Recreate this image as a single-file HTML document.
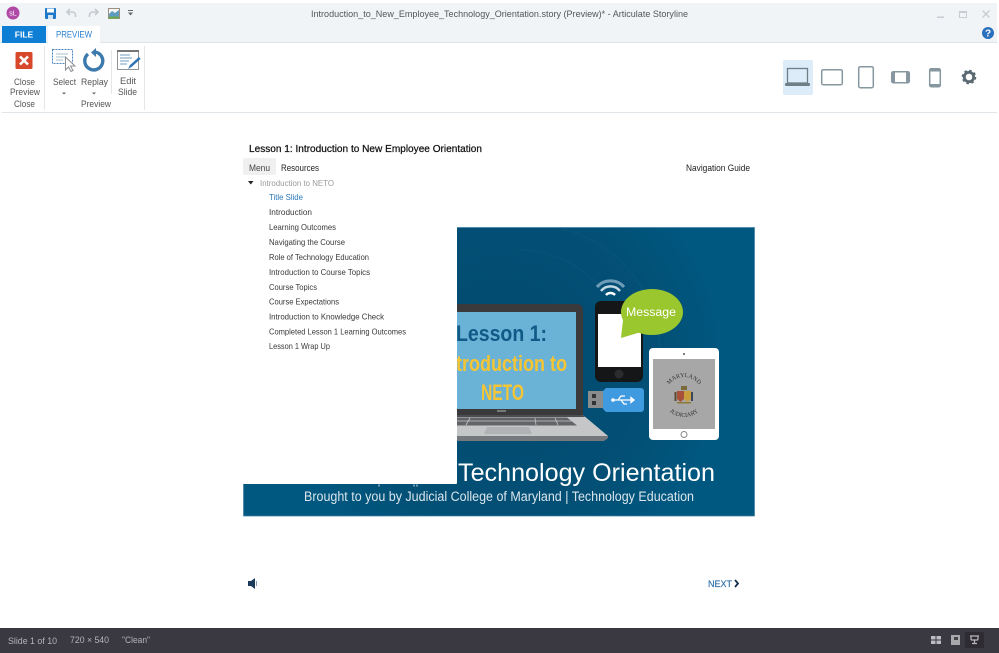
<!DOCTYPE html>
<html><head><meta charset="utf-8"><title>Articulate Storyline Preview</title>
<style>
html,body{margin:0;padding:0;background:#fff;width:999px;height:653px;overflow:hidden}
svg{display:block}
text{font-family:"Liberation Sans",sans-serif}
.u{font-size:9.5px;fill:#555}
.m{font-size:8.5px;fill:#3a3a3a}
.s{font-size:9.5px;fill:#b5b4b9}
.d{fill:none;stroke:#87979f;stroke-width:1.5}
</style></head><body>
<svg width="999" height="653" viewBox="0 0 999 653" xmlns="http://www.w3.org/2000/svg">
<defs>
<radialGradient id="bg" gradientUnits="userSpaceOnUse" cx="500" cy="360" r="220"><stop offset="0" stop-color="#024a6e"/><stop offset=".7" stop-color="#034f75"/><stop offset="1" stop-color="#00577f"/></radialGradient>
<clipPath id="sc"><rect x="457" y="312" width="119" height="97"/></clipPath>
<path id="arcT" d="M666 395a18 18 0 0 1 36 0"/>
<path id="arcB" d="M662 395a22 22 0 0 0 44 0"/>
</defs>
<rect width="999" height="653" fill="#fff"/>
<!-- title bar -->
<rect x="0" y="3" width="997" height="39" fill="#f1f4f7"/>
<rect x="0" y="42" width="997" height="1" fill="#dfe4e8"/>
<circle cx="13" cy="13" r="6.500" fill="#b04aa6"/><text x="13" y="15.500" font-size="7" fill="#fff" text-anchor="middle">sL</text>
<rect x="45" y="8" width="11" height="11" rx="1" fill="#1f78c8"/><rect x="47" y="8.500" width="7" height="4" fill="#fff"/><rect x="48" y="15" width="5" height="4" fill="#cfe3f5"/>
<path d="M70 9l-3 3 3 3M67.500 12h5a3 3 0 0 1 3 3v2" fill="none" stroke="#c5cace" stroke-width="1.600"/>
<path d="M95 9l3 3-3 3M97.500 12h-5a3 3 0 0 0-3 3v2" fill="none" stroke="#c5cace" stroke-width="1.600"/>
<rect x="108.500" y="8.500" width="11" height="10" fill="#f5f5f5" stroke="#9a8f80"/><path d="M109 18v-4l3-3 3 2 4-3v8z" fill="#5f9ac0"/><rect x="109" y="16.500" width="10" height="2" fill="#6aa84f"/>
<rect x="128" y="10" width="5" height="1" fill="#666"/><path d="M128 12.500h5l-2.500 3z" fill="#666"/>
<text x="311" y="17" class="u" textLength="377" lengthAdjust="spacingAndGlyphs">Introduction_to_New_Employee_Technology_Orientation.story (Preview)* -  Articulate Storyline</text>
<rect x="937" y="16.500" width="7" height="1.500" fill="#c9ccd0"/>
<rect x="959.500" y="11.500" width="7" height="6" fill="none" stroke="#c9ccd0"/><rect x="959" y="11" width="8" height="2" fill="#c9ccd0"/>
<path d="M982.500 10.500l7 7m0-7l-7 7" stroke="#c9ccd0" stroke-width="1.300"/>
<circle cx="988" cy="33" r="6" fill="#2a70bd"/><text x="988" y="36.500" font-size="10" font-weight="bold" fill="#fff" text-anchor="middle">?</text>
<!-- tabs -->
<rect x="2" y="26" width="44" height="17" fill="#0f7fd6"/><text x="24" y="37.500" font-size="8.500" font-weight="bold" fill="#fff" text-anchor="middle">FILE</text>
<rect x="48" y="26" width="52" height="17" fill="#fff"/><text x="56" y="37.500" font-size="9" fill="#2a7fd0" textLength="36" lengthAdjust="spacingAndGlyphs">PREVIEW</text>
<!-- ribbon -->
<rect x="15.500" y="52" width="17" height="17" rx="1.500" fill="#d8492b"/><path d="M20 56.500l8 8m0-8l-8 8" stroke="#fff" stroke-width="2.600"/>
<g font-size="9.500" fill="#555">
<text x="14" y="85" textLength="21" lengthAdjust="spacingAndGlyphs">Close</text>
<text x="10" y="95" textLength="30" lengthAdjust="spacingAndGlyphs">Preview</text>
<text x="14" y="107" textLength="21" lengthAdjust="spacingAndGlyphs">Close</text>
<text x="53" y="85" textLength="23" lengthAdjust="spacingAndGlyphs">Select</text>
<text x="81" y="85" textLength="27" lengthAdjust="spacingAndGlyphs">Replay</text>
<text x="81" y="107" textLength="30" lengthAdjust="spacingAndGlyphs">Preview</text>
<text x="120" y="84" textLength="16" lengthAdjust="spacingAndGlyphs">Edit</text>
<text x="118" y="95" textLength="19" lengthAdjust="spacingAndGlyphs">Slide</text>
</g>
<path d="M62 92.500h4l-2 2zM92 92.500h4l-2 2z" fill="#666"/>
<rect x="44" y="46" width="1" height="64" fill="#e3e7ea"/><rect x="111" y="50" width="1" height="44" fill="#e3e7ea"/><rect x="144" y="46" width="1" height="64" fill="#e3e7ea"/>
<rect x="52.500" y="49.500" width="20" height="14" fill="none" stroke="#4a86bd" stroke-dasharray="2 1"/>
<path d="M56 54h12M56 57h9M56 60h7" stroke="#a9bccb"/>
<path d="M65.500 57v13l3-3 2.500 4.500 2-1-2.500-4.500h4.500z" fill="#fff" stroke="#8c8f92"/>
<path d="M88 54a9 9 0 1 0 7-2" fill="none" stroke="#3c79ad" stroke-width="3.400"/><path d="M96 48v9l-5-4.500z" fill="#3c79ad"/>
<rect x="117.500" y="50.500" width="21" height="19" fill="#fff" stroke="#8f9397"/><rect x="117" y="50" width="22" height="2" fill="#777"/>
<path d="M120 55h10M120 58h12M120 61h9M120 64h7" stroke="#6f9cc2"/>
<path d="M128 69l2-4 9-8 1.500 2-9 8z" fill="#2f73b3"/>
<rect x="2" y="112" width="995" height="1" fill="#dfe5e9"/>
<!-- device icons -->
<rect x="783" y="60" width="30" height="35" rx="2" fill="#dcecf8"/>
<rect x="787.500" y="68.500" width="20" height="14.500" fill="none" stroke="#6f7f88" stroke-width="1.300"/><rect x="785" y="83" width="25" height="3" rx="1" fill="#6f7f88"/>
<rect x="821.700" y="69.700" width="20.600" height="15" rx="1.500" class="d"/>
<rect x="858.700" y="66.700" width="14.600" height="21" rx="1.500" class="d"/>
<rect x="891.700" y="71.700" width="17.600" height="11" rx="1.500" class="d"/><rect x="892" y="72" width="3" height="10.500" fill="#87979f"/><rect x="906" y="72" width="3" height="10.500" fill="#87979f"/>
<rect x="929.700" y="68.700" width="10.600" height="18" rx="1.500" class="d"/><rect x="930" y="69" width="10" height="2.500" fill="#87979f"/><rect x="930" y="84" width="10" height="2.500" fill="#87979f"/>
<circle cx="969" cy="77" r="4.700" fill="none" stroke="#5b6a72" stroke-width="2.800"/><circle cx="969" cy="77" r="6.300" fill="none" stroke="#5b6a72" stroke-width="2" stroke-dasharray="2.500 2.450"/>
<!-- slide -->
<rect x="243.500" y="227.500" width="511" height="288.500" fill="url(#bg)" stroke="#3d7ea3" stroke-width=".7"/>
<path d="M560 228a130 130 0 0 1 100 130" fill="none" stroke="#0a618a" stroke-width="2" opacity=".25"/>
<path d="M520 250a110 110 0 0 1 90 50" fill="none" stroke="#0a618a" stroke-width="2" opacity=".25"/>
<!-- laptop -->
<path d="M457 304h120a6 6 0 0 1 6 6v105h-126z" fill="#3a3a3d"/>
<rect x="457" y="312" width="119" height="97" fill="#6ab2d6"/>
<g clip-path="url(#sc)" font-weight="bold" font-size="22">
<text x="456" y="341" fill="#0f5a86" textLength="91" lengthAdjust="spacingAndGlyphs">Lesson 1:</text>
<text x="456" y="371" fill="#f5c533" textLength="111" lengthAdjust="spacingAndGlyphs">troduction to</text>
<text x="481" y="400" fill="#f5c533" textLength="43" lengthAdjust="spacingAndGlyphs">NETO</text>
</g>
<path d="M457 415h126l25 21v2l-4 2H457z" fill="#c4c6c8"/>
<path d="M457 436h151v2l-4 3H457z" fill="#75787c"/>
<path d="M457 415h126l2 2H457z" fill="#4b4d50"/>
<path d="M457 417.500h110l10 8H457z" fill="#626468"/>
<path d="M470 418l-4 7M535 418l1 7M555 418l3 7M457 421h116" stroke="#c4c6c8" stroke-width=".8"/>
<path d="M487 427h42l3 7h-48z" fill="#b0b2b5"/>
<rect x="497" y="410" width="9" height="2" fill="#777"/>
<!-- wifi -->
<path d="M597 287a18 18 0 0 1 27 0" fill="none" stroke="#6f9db8" stroke-width="3"/>
<path d="M601 291a12 12 0 0 1 19 0" fill="none" stroke="#c4d8e4" stroke-width="2.500"/>
<path d="M606 295a6 6 0 0 1 9 0" fill="none" stroke="#fff" stroke-width="2.500"/>
<!-- phone -->
<rect x="595" y="301" width="48" height="81" rx="6" fill="#151617"/>
<rect x="598" y="314" width="43" height="53" fill="#fff"/>
<circle cx="619" cy="374" r="4.500" fill="#2b2c2e"/>
<!-- bubble -->
<path d="M621 338l2-18 18 12z" fill="#9ac62e"/>
<ellipse cx="652" cy="312" rx="31" ry="23" fill="#9ac62e"/>
<text x="626" y="316" font-size="11.500" fill="#fff" textLength="50" lengthAdjust="spacingAndGlyphs">Message</text>
<!-- usb -->
<rect x="588" y="391" width="15" height="17" fill="#8a8c8e"/><rect x="592" y="394" width="4" height="4" fill="#333"/><rect x="592" y="401" width="4" height="4" fill="#333"/>
<path d="M603 391l3-3h35a3 3 0 0 1 3 3v18a3 3 0 0 1-3 3h-35l-3-3z" fill="#3f9ae0"/>
<path d="M612 400h22m0 0l-3-2.500v5zM618 400l3-4h4M621 400l3 4h3" fill="none" stroke="#fff" stroke-width="1.300"/><circle cx="613" cy="400" r="1.800" fill="#fff"/>
<!-- tablet -->
<rect x="649" y="348" width="70" height="92" rx="4" fill="#fff"/>
<rect x="653" y="359" width="62" height="70" fill="#a7a7a7"/>
<circle cx="684" cy="354" r="1" fill="#555"/>
<circle cx="684" cy="434.500" r="3" fill="#fff" stroke="#888"/>
<text font-size="6" fill="#333" text-anchor="middle" style="font-family:'Liberation Serif',serif"><textPath href="#arcT" startOffset="50%">MARYLAND</textPath></text>
<text font-size="6" fill="#333" text-anchor="middle" style="font-family:'Liberation Serif',serif"><textPath href="#arcB" startOffset="50%">JUDICIARY</textPath></text>
<path d="M677 391h7v8l-3.500 3-3.500-3z" fill="#a8513a"/><path d="M684 391h7v8l-3.500 3-3.500-3z" fill="#c89f3c"/><rect x="674.500" y="392" width="2" height="9" fill="#5a4a30"/><rect x="691" y="392" width="2" height="9" fill="#39485a"/><rect x="681" y="386" width="6" height="4" fill="#7a6a3a"/><rect x="677" y="402" width="14" height="1.500" fill="#8c7a3a"/>
<!-- slide text -->
<text x="458" y="481" font-size="25" fill="#fff" textLength="257" lengthAdjust="spacingAndGlyphs">Technology Orientation</text>
<text x="304" y="501" font-size="13.500" fill="#dbe6ec" textLength="390" lengthAdjust="spacingAndGlyphs">Brought to you by Judicial College of Maryland | Technology Education</text>
<!-- menu panel -->
<rect x="243" y="172" width="214" height="312" rx="1" fill="#fff"/>
<path d="M379 484.500v2M414 484.500v2M417 484.500v2" stroke="#dfe9ee"/>
<!-- player header -->
<text x="249" y="152" font-size="10.500" fill="#111" stroke="#111" stroke-width=".25" textLength="233" lengthAdjust="spacingAndGlyphs">Lesson 1: Introduction to New Employee Orientation</text>
<rect x="243" y="158" width="33" height="17" rx="2" fill="#f0f0f0"/>
<text x="249" y="171" font-size="9.500" fill="#444" textLength="21" lengthAdjust="spacingAndGlyphs">Menu</text>
<text x="281" y="171" font-size="9.500" fill="#222" textLength="38" lengthAdjust="spacingAndGlyphs">Resources</text>
<text x="686" y="171" font-size="9.500" fill="#222" textLength="64" lengthAdjust="spacingAndGlyphs">Navigation Guide</text>
<!-- menu list -->
<path d="M248 181h5.500l-2.750 3.500z" fill="#222"/>
<text x="260" y="186" class="m" style="fill:#9a9a9a" textLength="74" lengthAdjust="spacingAndGlyphs">Introduction to NETO</text>
<text x="269" y="200" class="m" style="fill:#2b78b8" textLength="34" lengthAdjust="spacingAndGlyphs">Title Slide</text>
<text x="269" y="215" class="m" textLength="43" lengthAdjust="spacingAndGlyphs">Introduction</text>
<text x="269" y="230" class="m" textLength="67" lengthAdjust="spacingAndGlyphs">Learning Outcomes</text>
<text x="269" y="245" class="m" textLength="76" lengthAdjust="spacingAndGlyphs">Navigating the Course</text>
<text x="269" y="260" class="m" textLength="100" lengthAdjust="spacingAndGlyphs">Role of Technology Education</text>
<text x="269" y="275" class="m" textLength="101" lengthAdjust="spacingAndGlyphs">Introduction to Course Topics</text>
<text x="269" y="290" class="m" textLength="48" lengthAdjust="spacingAndGlyphs">Course Topics</text>
<text x="269" y="304.500" class="m" textLength="70" lengthAdjust="spacingAndGlyphs">Course Expectations</text>
<text x="269" y="319.500" class="m" textLength="115" lengthAdjust="spacingAndGlyphs">Introduction to Knowledge Check</text>
<text x="269" y="334.500" class="m" textLength="137" lengthAdjust="spacingAndGlyphs">Completed Lesson 1 Learning Outcomes</text>
<text x="269" y="349" class="m" textLength="61" lengthAdjust="spacingAndGlyphs">Lesson 1 Wrap Up</text>
<!-- player footer -->
<path d="M248 581h3l4-3v11l-4-3h-3z" fill="#1c3a5c"/><path d="M256.500 581v5" stroke="#8a9bb0"/>
<text x="708" y="587" font-size="9.500" fill="#2b6fa8" stroke="#2b6fa8" stroke-width=".15" textLength="24" lengthAdjust="spacingAndGlyphs">NEXT</text>
<path d="M735 580l3 3.500-3 3.500" fill="none" stroke="#17304d" stroke-width="1.800"/>
<!-- status bar -->
<rect x="0" y="628" width="999" height="25" fill="#3a3840"/>
<text x="8" y="644" class="s" textLength="49" lengthAdjust="spacingAndGlyphs">Slide 1 of 10</text>
<text x="70" y="643" class="s" textLength="39" lengthAdjust="spacingAndGlyphs">720 × 540</text>
<text x="122" y="643" class="s" textLength="28" lengthAdjust="spacingAndGlyphs">"Clean"</text>
<path d="M931 636h4.500v3.500H931zM936.500 636h4.500v3.500h-4.500zM931 640.500h4.500v3.500H931zM936.500 640.500h4.500v3.500h-4.500z" fill="#bdbcc0"/>
<rect x="951" y="635" width="9" height="10" fill="#a9a8ac"/><rect x="954" y="637" width="4" height="3" fill="#444"/>
<rect x="965" y="632" width="19" height="16" fill="#2e2c32"/>
<path d="M970 636h9M971 636v3a1 1 0 0 0 1 1h5a1 1 0 0 0 1-1v-3M974.500 640v3M972 643.500h5" fill="none" stroke="#b8b7bb" stroke-width="1.200"/>
</svg>
</body></html>
